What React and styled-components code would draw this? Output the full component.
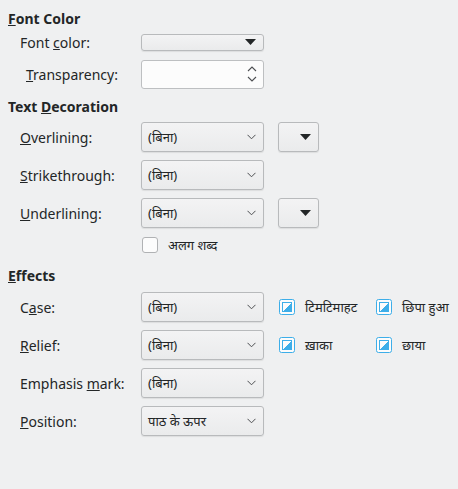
import React from 'react';
import styled, { createGlobalStyle } from 'styled-components';

const Global = createGlobalStyle`
  html, body { margin: 0; padding: 0; background: #eff0f1; }
  body { font-family: "Noto Sans", "Noto Sans Devanagari", "DejaVu Sans", sans-serif; font-size: 14px; color: #232627; }
`;

const Page = styled.div`
  width: 458px;
  height: 489px;
  box-sizing: border-box;
  padding: 8px 0 0 8px;
  background: #eff0f1;
`;

const Heading = styled.div`
  font-weight: bold;
  height: 18px;
  line-height: 18px;
  padding-top: 2px;
  margin-top: ${p => p.$top || 0}px;
`;

const Rows = styled.div`
  display: flex;
  flex-direction: column;
  gap: ${p => p.$gap || 8}px;
  margin-top: ${p => p.$top || 0}px;
  padding-left: 12px;
`;

const Row = styled.div`
  display: flex;
  align-items: center;
  height: ${p => p.$h || 30}px;
`;

const Label = styled.div`
  width: ${p => 121 - (p.$indent || 0)}px;
  padding-left: ${p => p.$indent || 0}px;
  white-space: nowrap;
  color: #232627;
`;

const Hindi = styled.span`
  font-size: 13px;
  white-space: nowrap;
`;

const Combo = styled.div`
  box-sizing: border-box;
  width: 123px;
  height: 30px;
  border: 1px solid #b8babc;
  border-radius: 3px;
  background: linear-gradient(#f3f3f4, #eaebec);
  box-shadow: 0 1px 1px rgba(0,0,0,0.08);
  display: flex;
  align-items: center;
  justify-content: space-between;
  padding: 0 7px 0 6px;
`;

const ColorButton = styled.div`
  box-sizing: border-box;
  width: ${p => p.$w}px;
  height: ${p => p.$h}px;
  margin-left: ${p => p.$ml || 0}px;
  border: 1px solid #b8babc;
  border-radius: 3px;
  background: linear-gradient(#f3f3f4, #eaebec);
  box-shadow: 0 1px 1px rgba(0,0,0,0.08);
  display: flex;
  align-items: center;
  justify-content: flex-end;
  padding-right: ${p => p.$pr}px;
`;

const Spin = styled.div`
  box-sizing: border-box;
  width: 123px;
  height: 29px;
  border: 1px solid #bdbfc1;
  border-radius: 3px;
  background: #fcfcfc;
  display: flex;
  align-items: center;
  justify-content: flex-end;
  padding-right: 6px;
`;

const CheckRow = styled.div`
  display: flex;
  align-items: center;
  height: 18px;
  padding-left: 122px;
  gap: 10px;
`;

const Box = styled.div`
  box-sizing: border-box;
  width: 16px;
  height: 16px;
  border: 1px solid #b0b2b4;
  border-radius: 3px;
  background: #fcfcfc;
`;

const Tri = styled.div`
  display: flex;
  align-items: center;
  gap: 10px;
  width: ${p => p.$w}px;
  margin-left: ${p => p.$ml || 0}px;
  white-space: nowrap;
`;

const Chevron = () => (
  <svg width="9" height="6" viewBox="0 0 9 6">
    <path d="M0.5 0.8 L4.5 4.8 L8.5 0.8" fill="none" stroke="#4d4f52" strokeWidth="1" />
  </svg>
);

const Arrow = () => (
  <svg width="11" height="6" viewBox="0 0 11 6">
    <path d="M0 0 H11 L5.5 6 Z" fill="#232627" />
  </svg>
);

const SpinArrows = () => (
  <svg width="10" height="18" viewBox="0 0 10 18">
    <path d="M1 6 L5 2 L9 6" fill="none" stroke="#4d4f52" strokeWidth="1.1" />
    <path d="M1 12 L5 16 L9 12" fill="none" stroke="#4d4f52" strokeWidth="1.1" />
  </svg>
);

const TriCheck = () => (
  <svg width="16" height="16" viewBox="0 0 16 16">
    <rect x="0.5" y="0.5" width="15" height="15" rx="2" fill="#fcfcfc" stroke="#3daee9" />
    <rect x="3" y="3" width="10" height="10" fill="#3daee9" />
    <path d="M4 4 H12 V5 H11 V6 H10 V7 H9 V8 H8 V9 H7 V10 H6 V11 H5 V12 H4 Z" fill="#fcfcfc" />
  </svg>
);

const Select = ({ value }) => (
  <Combo>
    <Hindi>{value}</Hindi>
    <Chevron />
  </Combo>
);

export default function App() {
  return (
    <Page>
      <Global />
      <Heading><u>F</u>ont Color</Heading>
      <Rows $top={2} $gap={6}>
        <Row $h={24}>
          <Label>Font <u>c</u>olor:</Label>
          <ColorButton $w={123} $h={17} $pr={7}><Arrow /></ColorButton>
        </Row>
        <Row $h={28}>
          <Label $indent={6}><u>T</u>ransparency:</Label>
          <Spin><SpinArrows /></Spin>
        </Row>
      </Rows>

      <Heading $top={8}>Text <u>D</u>ecoration</Heading>
      <Rows $top={6}>
        <Row>
          <Label><u>O</u>verlining:</Label>
          <Select value="(बिना)" />
          <ColorButton $w={41} $h={30} $ml={14} $pr={7}><Arrow /></ColorButton>
        </Row>
        <Row>
          <Label><u>S</u>trikethrough:</Label>
          <Select value="(बिना)" />
        </Row>
        <Row>
          <Label><u>U</u>nderlining:</Label>
          <Select value="(बिना)" />
          <ColorButton $w={41} $h={30} $ml={14} $pr={7}><Arrow /></ColorButton>
        </Row>
        <CheckRow>
          <Box />
          <Hindi>अलग शब्द</Hindi>
        </CheckRow>
      </Rows>

      <Heading $top={11}><u>E</u>ffects</Heading>
      <Rows $top={7}>
        <Row>
          <Label>C<u>a</u>se:</Label>
          <Select value="(बिना)" />
          <Tri $w={97} $ml={15}><TriCheck /><Hindi>टिमटिमाहट</Hindi></Tri>
          <Tri><TriCheck /><Hindi>छिपा हुआ</Hindi></Tri>
        </Row>
        <Row>
          <Label><u>R</u>elief:</Label>
          <Select value="(बिना)" />
          <Tri $w={97} $ml={15}><TriCheck /><Hindi>ख़ाका</Hindi></Tri>
          <Tri><TriCheck /><Hindi>छाया</Hindi></Tri>
        </Row>
        <Row>
          <Label>Emphasis <u>m</u>ark:</Label>
          <Select value="(बिना)" />
        </Row>
        <Row>
          <Label><u>P</u>osition:</Label>
          <Select value="पाठ के ऊपर" />
        </Row>
      </Rows>
    </Page>
  );
}
